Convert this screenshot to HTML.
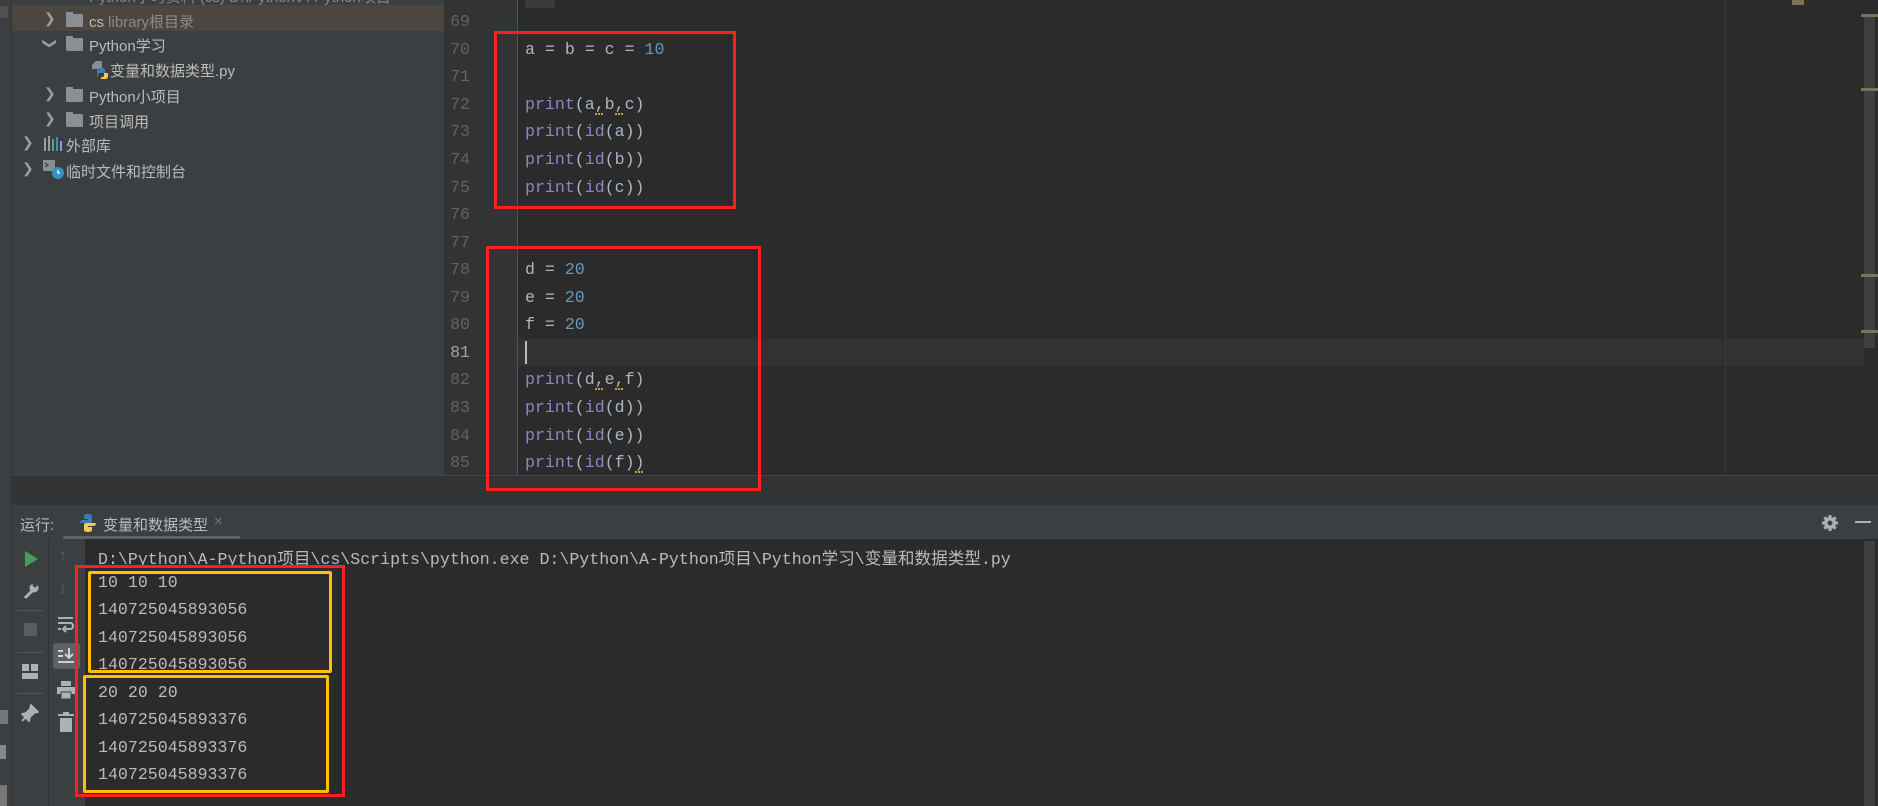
<!DOCTYPE html>
<html><head><meta charset="utf-8"><style>
*{margin:0;padding:0;box-sizing:border-box}
body{width:1878px;height:806px;overflow:hidden;background:#2b2b2b;position:relative;font-family:"Liberation Sans","Noto Sans CJK SC",sans-serif}
.a{position:absolute}
.ui{font-size:15px;color:#bbbbbb;white-space:nowrap}
.mono{font-family:"Liberation Mono","DejaVu Sans Mono",monospace;font-size:16.6px;white-space:pre}
.ln{color:#606366;width:20px;text-align:right;left:450px}
.code{left:525px;color:#a9b7c6}
.p{color:#8888c6}.n{color:#6897bb}
.out{left:98px;color:#bbbbbb}
.folder{width:17px;height:13px;background:#8a8f94;border-radius:1px}
.folder:before{content:"";position:absolute;left:0;top:-2px;width:7px;height:3px;background:#8a8f94}
.chev{color:#9a9da0;font-size:14px}
.sq{position:absolute;height:4px;width:8px;border-bottom:2px dotted #c5a23b}
</style></head><body>
<!-- left strip -->
<div class="a" style="left:0;top:0;width:12px;height:806px;background:#3c3f41;border-right:1px solid #323232"></div>
<div class="a" style="left:0;top:6px;width:8px;height:12px;background:#4e5254"></div>
<!-- project panel -->
<div class="a" style="left:12px;top:0;width:432px;height:475px;background:#3c3f41"></div>
<div class="a" style="left:12px;top:5px;width:432px;height:26px;background:#4b4740"></div>
<div class="a ui" style="left:89px;top:-14px;color:#888">Python学习资料 (cs) D:\Python\A-Python项目</div>
<div class="a chev" style="left:44px;top:10px">&#x276F;</div>
<div class="a folder" style="left:66px;top:14px"></div>
<div class="a ui" style="left:89px;top:11px">cs <span style="color:#8a8a8a">library根目录</span></div>
<div class="a chev" style="left:44px;top:35px;transform:rotate(90deg)">&#x276F;</div>
<div class="a folder" style="left:66px;top:38px"></div>
<div class="a ui" style="left:89px;top:35px">Python学习</div>
<svg class="a" style="left:91px;top:61px" width="18" height="19"><path d="M1 4 L5 0 H11 V8 H1Z" fill="#8a8f94"/><path d="M6 9 Q6 7 9 7 H12 Q14 7 14 9 V12 H9 Q7 12 7 14 V16 H6Z" fill="#3e7bb5"/><path d="M17 11 V15 Q17 18 14 18 H10 V16 H12 Q13 16 13 14 V12 H17Z" fill="#f2c94c"/></svg>
<div class="a ui" style="left:110px;top:60px">变量和数据类型.py</div>
<div class="a chev" style="left:44px;top:85px">&#x276F;</div>
<div class="a folder" style="left:66px;top:89px"></div>
<div class="a ui" style="left:89px;top:86px">Python小项目</div>
<div class="a chev" style="left:44px;top:110px">&#x276F;</div>
<div class="a folder" style="left:66px;top:114px"></div>
<div class="a ui" style="left:89px;top:111px">项目调用</div>
<div class="a chev" style="left:22px;top:134px">&#x276F;</div>
<svg class="a" style="left:44px;top:136px" width="18" height="16"><rect x="0" y="2" width="2" height="13" fill="#9a9da0"/><rect x="4" y="0" width="2" height="15" fill="#9a9da0"/><rect x="8" y="3" width="2" height="12" fill="#59a869"/><rect x="12" y="1" width="2" height="14" fill="#3592c4"/><rect x="16" y="5" width="2" height="10" fill="#9a9da0"/></svg>
<div class="a ui" style="left:66px;top:135px">外部库</div>
<div class="a chev" style="left:22px;top:160px">&#x276F;</div>
<svg class="a" style="left:43px;top:160px" width="22" height="20"><rect x="0" y="0" width="12" height="11" fill="#8a8f94"/><path d="M2 3 L5 5 L2 7" stroke="#3c3f41" stroke-width="1.2" fill="none"/><circle cx="15" cy="13" r="6" fill="#3592c4"/><path d="M15 10 V13 H17" stroke="#fff" stroke-width="1.3" fill="none"/></svg>
<div class="a ui" style="left:66px;top:161px">临时文件和控制台</div>
<div class="a" style="left:444px;top:0;width:1px;height:475px;background:#323232"></div>
<!-- editor gutter -->
<div class="a" style="left:445px;top:0;width:73px;height:475px;background:#313335"></div>
<div class="a" style="left:517px;top:0;width:1px;height:475px;background:#555"></div>
<div class="a" style="left:518px;top:339px;width:1346px;height:27px;background:#323232"></div>
<div class="a" style="left:1725px;top:0;width:1px;height:475px;background:#3b3b3b"></div>
<div class="a" style="left:1864px;top:14px;width:11px;height:334px;background:#3e3f40"></div>
<div class="a" style="left:1861px;top:14px;width:17px;height:3px;background:#7a7358"></div>
<div class="a" style="left:1861px;top:88px;width:17px;height:3px;background:#7a7358"></div>
<div class="a" style="left:1861px;top:274px;width:17px;height:3px;background:#7a7358"></div>
<div class="a" style="left:1861px;top:330px;width:17px;height:3px;background:#7a7358"></div>
<div class="a" style="left:1792px;top:0;width:12px;height:5px;background:#7a7358"></div>
<div class="a" style="left:525px;top:0;width:30px;height:8px;background:#3a3a3a"></div>
<!-- line numbers -->
<div class="a mono ln" style="top:12px">69</div>
<div class="a mono ln" style="top:40px">70</div>
<div class="a mono ln" style="top:67px">71</div>
<div class="a mono ln" style="top:95px">72</div>
<div class="a mono ln" style="top:122px">73</div>
<div class="a mono ln" style="top:150px">74</div>
<div class="a mono ln" style="top:178px">75</div>
<div class="a mono ln" style="top:205px">76</div>
<div class="a mono ln" style="top:233px">77</div>
<div class="a mono ln" style="top:260px">78</div>
<div class="a mono ln" style="top:288px">79</div>
<div class="a mono ln" style="top:315px">80</div>
<div class="a mono ln" style="top:343px;color:#a4a3a3">81</div>
<div class="a mono ln" style="top:370px">82</div>
<div class="a mono ln" style="top:398px">83</div>
<div class="a mono ln" style="top:426px">84</div>
<div class="a mono ln" style="top:453px">85</div>
<!-- code -->
<div class="a mono code" style="top:40px">a = b = c = <span class="n">10</span></div>
<div class="a mono code" style="top:95px"><span class="p">print</span>(a,b,c)</div>
<div class="sq" style="left:595px;top:111px"></div><div class="sq" style="left:615px;top:111px"></div>
<div class="a mono code" style="top:122px"><span class="p">print</span>(<span class="p">id</span>(a))</div>
<div class="a mono code" style="top:150px"><span class="p">print</span>(<span class="p">id</span>(b))</div>
<div class="a mono code" style="top:178px"><span class="p">print</span>(<span class="p">id</span>(c))</div>
<div class="a mono code" style="top:260px">d = <span class="n">20</span></div>
<div class="a mono code" style="top:288px">e = <span class="n">20</span></div>
<div class="a mono code" style="top:315px">f = <span class="n">20</span></div>
<div class="a" style="left:525px;top:341px;width:2px;height:23px;background:#bbbbbb"></div>
<div class="a mono code" style="top:370px"><span class="p">print</span>(d,e,f)</div>
<div class="sq" style="left:595px;top:386px"></div><div class="sq" style="left:615px;top:386px"></div>
<div class="a mono code" style="top:398px"><span class="p">print</span>(<span class="p">id</span>(d))</div>
<div class="a mono code" style="top:426px"><span class="p">print</span>(<span class="p">id</span>(e))</div>
<div class="a mono code" style="top:453px"><span class="p">print</span>(<span class="p">id</span>(f))</div>
<div class="sq" style="left:635px;top:469px"></div>
<!-- separator bar -->
<div class="a" style="left:12px;top:475px;width:1866px;height:30px;background:#313335;border-top:1px solid #444"></div>
<!-- tool header -->
<div class="a" style="left:12px;top:505px;width:1866px;height:34px;background:#3c3f41"></div>
<div class="a ui" style="left:20px;top:514px">运行:</div>
<svg class="a" style="left:79px;top:514px" width="18" height="18"><path d="M1 9 Q1 6 4 6 H9 V5 H5 V2 Q5 0 9 0 Q13 0 13 2 V7 Q13 9 11 9Z" fill="#3e7bb5"/><path d="M17 9 Q17 12 14 12 H9 V13 H13 V16 Q13 18 9 18 Q5 18 5 16 V11 Q5 9 7 9Z" fill="#f2c94c"/></svg>
<div class="a ui" style="left:103px;top:514px">变量和数据类型</div>
<div class="a ui" style="left:214px;top:513px;color:#777">×</div>
<div class="a" style="left:63px;top:536px;width:177px;height:3px;background:#5f6365;border-radius:2px"></div>
<svg class="a" style="left:1821px;top:514px" width="18" height="18" viewBox="0 0 18 18"><g fill="#aeb1b3"><circle cx="9" cy="9" r="6"/><rect x="7.5" y="1" width="3" height="16"/><rect x="1" y="7.5" width="16" height="3"/><rect x="7.5" y="1" width="3" height="16" transform="rotate(45 9 9)"/><rect x="7.5" y="1" width="3" height="16" transform="rotate(-45 9 9)"/></g><circle cx="9" cy="9" r="2.5" fill="#3c3f41"/></svg>
<div class="a" style="left:1855px;top:521px;width:16px;height:2px;background:#aeb1b3"></div>
<!-- console toolbar -->
<div class="a" style="left:12px;top:539px;width:36px;height:267px;background:#3c3f41"></div>
<div class="a" style="left:48px;top:539px;width:37px;height:267px;background:#3c3f41;border-left:1px solid #323232"></div>
<svg class="a" style="left:23px;top:550px" width="16" height="18"><path d="M2 1 L15 9 L2 17Z" fill="#499c54"/></svg>
<svg class="a" style="left:22px;top:582px" width="18" height="18"><path d="M3 16 L10 9" stroke="#aeb1b3" stroke-width="3"/><circle cx="12" cy="6" r="4.5" fill="#aeb1b3"/><rect x="11" y="0" width="4" height="5" fill="#3c3f41" transform="rotate(45 13 3)"/></svg>
<div class="a" style="left:17px;top:610px;width:26px;height:1px;background:#555"></div>
<div class="a" style="left:24px;top:623px;width:13px;height:13px;background:#5a5d5f"></div>
<div class="a" style="left:17px;top:652px;width:26px;height:1px;background:#555"></div>
<svg class="a" style="left:22px;top:664px" width="16" height="16"><rect x="0" y="0" width="7" height="7" fill="#aeb1b3"/><rect x="9" y="0" width="7" height="7" fill="#aeb1b3"/><rect x="0" y="9" width="16" height="6" fill="#aeb1b3"/></svg>
<div class="a" style="left:17px;top:693px;width:26px;height:1px;background:#555"></div>
<svg class="a" style="left:21px;top:704px" width="18" height="18"><path d="M10 1 L17 8 L13 9 L9 13 L8 17 L1 10 L5 9 L9 5Z M5 13 L1 17" stroke="#aeb1b3" stroke-width="1.8" fill="#aeb1b3"/></svg>
<div class="a ui" style="left:59px;top:547px;color:#5e6163;font-size:16px">↑</div>
<div class="a ui" style="left:59px;top:580px;color:#5e6163;font-size:16px">↓</div>
<svg class="a" style="left:57px;top:615px" width="18" height="18"><rect x="1" y="2" width="15" height="2" fill="#aeb1b3"/><path d="M1 8 H13 Q16 8 16 11 Q16 14 13 14 H8" stroke="#aeb1b3" stroke-width="2" fill="none"/><path d="M9 11 L6 14 L9 17" stroke="#aeb1b3" stroke-width="2" fill="none"/><rect x="1" y="13" width="3" height="2" fill="#aeb1b3"/></svg>
<div class="a" style="left:53px;top:643px;width:27px;height:26px;background:#5c6164;border-radius:3px"></div>
<svg class="a" style="left:57px;top:647px" width="18" height="18"><rect x="1" y="3" width="5" height="2" fill="#d0d0d0"/><rect x="1" y="8" width="5" height="2" fill="#d0d0d0"/><rect x="1" y="14" width="16" height="2" fill="#d0d0d0"/><path d="M12 1 V11 M8 7 L12 11 L16 7" stroke="#d0d0d0" stroke-width="2" fill="none"/></svg>
<svg class="a" style="left:57px;top:681px" width="18" height="18"><rect x="4" y="0" width="10" height="5" fill="#aeb1b3"/><rect x="0" y="6" width="18" height="7" fill="#aeb1b3"/><rect x="4" y="11" width="10" height="7" fill="#aeb1b3" stroke="#3c3f41" stroke-width="1"/></svg>
<svg class="a" style="left:58px;top:712px" width="16" height="20"><rect x="0" y="2" width="16" height="2" fill="#aeb1b3"/><rect x="5" y="0" width="6" height="2" fill="#aeb1b3"/><rect x="2" y="6" width="12" height="14" fill="#aeb1b3"/></svg>
<div class="a" style="left:0;top:710px;width:8px;height:14px;background:#777"></div>
<div class="a" style="left:0;top:745px;width:6px;height:14px;background:#888"></div>
<div class="a" style="left:0;top:785px;width:7px;height:21px;background:#777"></div>
<!-- console output -->
<div class="a mono out" style="top:545px">D:\Python\A-Python项目\cs\Scripts\python.exe D:\Python\A-Python项目\Python学习\变量和数据类型.py</div>
<div class="a mono out" style="top:573px">10 10 10</div>
<div class="a mono out" style="top:600px">140725045893056</div>
<div class="a mono out" style="top:628px">140725045893056</div>
<div class="a mono out" style="top:655px">140725045893056</div>
<div class="a mono out" style="top:683px">20 20 20</div>
<div class="a mono out" style="top:710px">140725045893376</div>
<div class="a mono out" style="top:738px">140725045893376</div>
<div class="a mono out" style="top:765px">140725045893376</div>
<div class="a" style="left:1864px;top:541px;width:11px;height:265px;background:#3e3f40"></div>
<!-- boxes -->
<div class="a" style="left:494px;top:31px;width:242px;height:178px;border:3px solid #ff1f1f"></div>
<div class="a" style="left:486px;top:246px;width:275px;height:245px;border:3px solid #ff1f1f"></div>
<div class="a" style="left:75px;top:565px;width:270px;height:232px;border:3px solid #ff1f1f"></div>
<div class="a" style="left:88px;top:571px;width:244px;height:102px;border:3px solid #ffc000;border-radius:2px"></div>
<div class="a" style="left:83px;top:675px;width:246px;height:118px;border:3px solid #ffc000;border-radius:2px"></div>
</body></html>
